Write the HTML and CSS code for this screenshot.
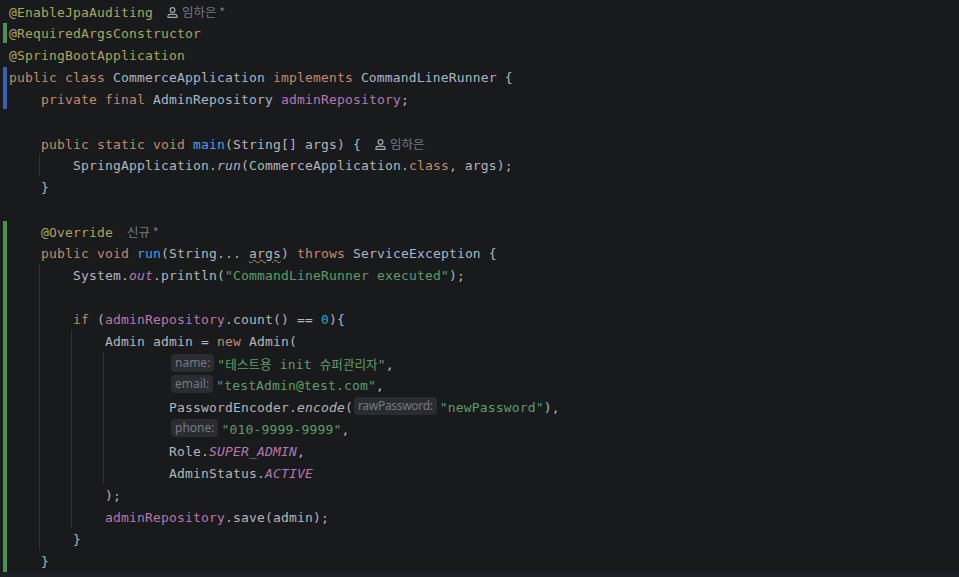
FILE: index.html
```html
<!DOCTYPE html>
<html>
<head>
    <title>CommerceApplication.java</title>
    <link rel="stylesheet" href="styles.css">
</head>
<body>
    <div class="editor">
        <div class="gutter">
            <div class="mark mark-first"></div>
            <div class="mark mark-second"></div>
            <div class="mark mark-third"></div>
        </div>
        <div class="code">
            <div class="line"><span class="ann">@EnableJpaAuditing</span><span class="author"><svg class="person" viewBox="0 0 11 11"><circle cx="5.5" cy="3" r="2.4"/><path d="M1 10.4V9.2c0-1 .8-1.8 1.8-1.8h5.4c1 0 1.8.8 1.8 1.8v1.2z"/></svg>임하은 *</span></div>
            <div class="line"><span class="ann">@RequiredArgsConstructor</span></div>
            <div class="line"><span class="ann">@SpringBootApplication</span></div>
            <div class="line"><span class="kw">public class</span> <span class="type">CommerceApplication</span> <span class="kw">implements</span> <span class="type">CommandLineRunner</span> {</div>
            <div class="members">
                <div class="line"><span class="kw">private final</span> <span class="type">AdminRepository</span> <span class="field">adminRepository</span>;</div>
                <div class="line"></div>
                <div class="line"><span class="kw">public static void</span> <span class="fn">main</span>(String[] args) {<span class="author"><svg class="person" viewBox="0 0 11 11"><circle cx="5.5" cy="3" r="2.4"/><path d="M1 10.4V9.2c0-1 .8-1.8 1.8-1.8h5.4c1 0 1.8.8 1.8 1.8v1.2z"/></svg>임하은</span></div>
                <div class="block">
                    <div class="line">SpringApplication.<i>run</i>(CommerceApplication.<span class="kw">class</span>, args);</div>
                </div>
                <div class="line">}</div>
                <div class="line"></div>
                <div class="line"><span class="ann">@Override</span><span class="author">신규 *</span></div>
                <div class="line"><span class="kw">public void</span> <span class="fn">run</span>(String... <span class="warn">args</span>) <span class="kw">throws</span> <span class="type">ServiceException</span> {</div>
                <div class="block">
                    <div class="line">System.<i class="field">out</i>.println(<span class="str">"CommandLineRunner executed"</span>);</div>
                    <div class="line"></div>
                    <div class="line"><span class="kw">if</span> (<span class="field">adminRepository</span>.count() == <span class="num">0</span>){</div>
                    <div class="block">
                        <div class="line">Admin admin = <span class="kw">new</span> Admin(</div>
                        <div class="block block-args">
                            <div class="line"><span class="hint">name:</span><span class="str">"<span class="ko">테스트용</span> init <span class="ko">슈퍼관리자</span>"</span>,</div>
                            <div class="line"><span class="hint">email:</span><span class="str">"testAdmin@test.com"</span>,</div>
                            <div class="line">PasswordEncoder.<i>encode</i>(<span class="hint hint-inner">rawPassword:</span><span class="str">"newPassword"</span>),</div>
                            <div class="line"><span class="hint">phone:</span><span class="str">"010-9999-9999"</span>,</div>
                            <div class="line">Role.<i class="field">SUPER_ADMIN</i>,</div>
                            <div class="line">AdminStatus.<i class="field">ACTIVE</i></div>
                        </div>
                        <div class="line">);</div>
                        <div class="line"><span class="field">adminRepository</span>.save(admin);</div>
                    </div>
                    <div class="line">}</div>
                </div>
                <div class="line">}</div>
            </div>
        </div>
    </div>
    <div class="statusbar"></div>
</body>
</html>
```
FILE: styles.css
```css
html, body {
    margin: 0;
    height: 100%;
    overflow: hidden;
}
body {
    display: flex;
    flex-direction: column;
    background-color: #191a1c;
    color: #b4b6bc;
    font-family: "DejaVu Sans Mono", "Noto Sans CJK KR", monospace;
    font-size: 13px;
    letter-spacing: 0.17px;
}
.editor {
    display: flex;
    height: 572px;
}
.gutter {
    display: flex;
    flex-direction: column;
    flex: none;
    width: 9px;
}
.mark {
    width: 4px;
    margin-left: 3px;
}
.mark-first {
    height: 20px;
    margin-top: 23px;
    background-color: #4f8f55;
}
.mark-second {
    height: 42px;
    margin-top: 24px;
    background-color: #3a5fae;
}
.mark-third {
    flex: 1;
    margin-top: 112px;
    background-color: #4f8f55;
}
.line {
    height: 22px;
    line-height: 24px;
    white-space: pre;
}
.members {
    padding-left: 32px;
}
.block {
    margin-left: -2px;
    padding-left: 33px;
    border-left: 1px solid #313235;
}
.block-args {
    padding-left: 65px;
}
.kw {
    color: #c78a69;
}
.ann {
    color: #aba75c;
}
.type {
    color: #a9b7c6;
}
.fn {
    color: #4f9fe8;
}
.field {
    color: #b878b0;
}
.str {
    color: #5f9e68;
}
.num {
    color: #2aacb8;
}
i {
    font-style: italic;
}
.warn {
    text-decoration: underline wavy #a89a58;
    text-decoration-thickness: 1px;
}
.ko {
    font-family: "Noto Sans CJK KR", sans-serif;
    font-size: 12.6px;
    letter-spacing: 0;
}
.author {
    margin-left: 14px;
    color: #777a80;
    font-family: "Noto Sans CJK KR", sans-serif;
    font-size: 12.5px;
    letter-spacing: 0;
}
.person {
    width: 11px;
    height: 11px;
    margin-right: 4px;
    vertical-align: -1px;
    fill: none;
    stroke: #a4a7ad;
    stroke-width: 1.2;
}
.hint {
    display: inline-block;
    height: 18px;
    margin: 0 3px 0 2px;
    padding: 0 4px;
    border-radius: 4px;
    background-color: #2a2c30;
    color: #777a80;
    font-family: "Noto Sans", sans-serif;
    font-size: 12px;
    line-height: 18px;
    letter-spacing: 0;
    vertical-align: 2px;
}
.hint-inner {
    margin-left: 1px;
    letter-spacing: -0.3px;
}
.statusbar {
    flex: 1;
    background-color: #1e1f22;
}
```
